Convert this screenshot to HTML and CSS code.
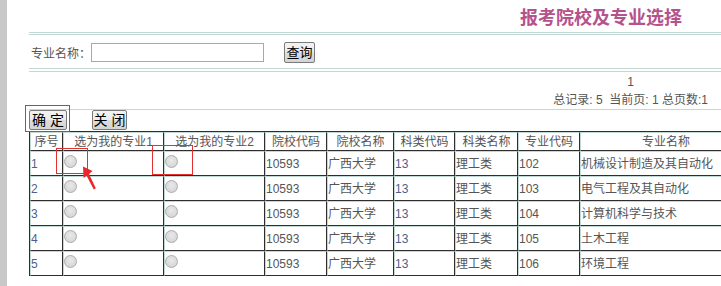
FILE: index.html
```html
<!DOCTYPE html>
<html lang="zh-CN">
<head>
<meta charset="utf-8">
<title>报考院校及专业选择</title>
<link rel="stylesheet" href="styles.css">
</head>
<body>
<div class="page">
  <div class="strip"></div>
  <div class="main">
    <h1 class="title">报考院校及专业选择</h1>
    <div class="rule rule-double"></div>
    <form class="search">
      <label class="search-label" for="zymc">专业名称<span class="colon">：</span></label>
      <input id="zymc" class="search-input" type="text">
      <button type="button" class="btn btn-query">查询</button>
    </form>
    <div class="rule rule-double2"></div>
    <div class="pager">
      <div class="pager-box">
        <div class="pager-num">1</div>
        <div class="pager-stats">总记录: 5&nbsp; 当前页: 1 总页数:1</div>
      </div>
    </div>
    <div class="rule rule-single"></div>
    <div class="actions">
      <button type="button" class="btn btn-ok">确 定</button>
      <button type="button" class="btn btn-close">关 闭</button>
    </div>
    <table class="grid">
      <thead>
        <tr>
          <th class="w-no">序号</th>
          <th class="w-pick">选为我的专业1</th>
          <th class="w-pick">选为我的专业2</th>
          <th class="w-code">院校代码</th>
          <th class="w-school">院校名称</th>
          <th class="w-kl">科类代码</th>
          <th class="w-klname">科类名称</th>
          <th class="w-zy">专业代码</th>
          <th class="w-zyname">专业名称</th>
        </tr>
      </thead>
      <tbody>
        <tr>
          <td class="blue">1</td>
          <td class="pick"><span class="radio"></span></td>
          <td class="pick"><span class="radio"></span></td>
          <td>10593</td><td>广西大学</td><td class="blue">13</td><td>理工类</td><td>102</td><td>机械设计制造及其自动化</td>
        </tr>
        <tr>
          <td class="blue">2</td>
          <td class="pick"><span class="radio"></span></td>
          <td class="pick"><span class="radio"></span></td>
          <td>10593</td><td>广西大学</td><td class="blue">13</td><td>理工类</td><td>103</td><td>电气工程及其自动化</td>
        </tr>
        <tr>
          <td class="blue">3</td>
          <td class="pick"><span class="radio"></span></td>
          <td class="pick"><span class="radio"></span></td>
          <td>10593</td><td>广西大学</td><td class="blue">13</td><td>理工类</td><td>104</td><td>计算机科学与技术</td>
        </tr>
        <tr>
          <td class="blue">4</td>
          <td class="pick"><span class="radio"></span></td>
          <td class="pick"><span class="radio"></span></td>
          <td>10593</td><td>广西大学</td><td class="blue">13</td><td>理工类</td><td>105</td><td>土木工程</td>
        </tr>
        <tr>
          <td class="blue">5</td>
          <td class="pick"><span class="radio"></span></td>
          <td class="pick"><span class="radio"></span></td>
          <td>10593</td><td>广西大学</td><td class="blue">13</td><td>理工类</td><td>106</td><td>环境工程</td>
        </tr>
      </tbody>
    </table>
  </div>
  <div class="mark mark-ok"></div>
  <div class="mark mark-r1"></div>
  <div class="mark mark-r2"></div>
  <svg class="arrow" width="22" height="28" viewBox="0 0 22 28">
    <polygon points="5,2.5 14.5,7 11,10 17.8,24.2 15.8,25.6 8.6,11.8 5.6,14" fill="#e8282c"/>
  </svg>
</div>
</body>
</html>
```

FILE: styles.css
```css
html, body {
  margin: 0;
  padding: 0;
  background: #fff;
  overflow: hidden;
}

body {
  font-family: "Liberation Sans", "Noto Sans CJK SC", sans-serif;
  font-size: 12px;
  color: #555;
}

.page {
  position: relative;
  display: flex;
  width: 721px;
  height: 286px;
  overflow: hidden;
}

.strip {
  flex: 0 0 7px;
  background: #c8c8c8;
}

.main {
  flex: 0 0 692px;
  min-width: 0;
  margin-left: 22px;
}

.title {
  margin: 0;
  padding: 6px 39px 0 0;
  height: 24px;
  line-height: 24px;
  font-size: 18px;
  font-weight: bold;
  text-align: right;
  color: #b5528c;
}

.rule-double {
  margin-top: 2px;
  height: 1px;
  border-top: 1px solid #c2d9d5;
  border-bottom: 1px solid #c2d9d5;
}

.rule-double2 {
  height: 2px;
  border-top: 1px solid #c2d9d5;
  border-bottom: 1px solid #c2d9d5;
}

.rule-single {
  height: 0;
  border-top: 1px solid #c2d9d5;
}

.search {
  display: flex;
  align-items: center;
  box-sizing: border-box;
  height: 33px;
  margin: 0;
  padding: 2px 0 0 2px;
}

.search-label {
  display: flex;
  width: 60px;
  font-size: 12px;
  color: #555;
}

.colon {
  display: inline-block;
  width: 12px;
  text-align: center;
  font-family: "Liberation Sans", sans-serif;
}

.search-input {
  box-sizing: border-box;
  width: 173px;
  height: 19px;
  margin: 0;
  padding: 0 2px;
  border: 1px solid #a9a9a9;
  background: #fff;
  outline: none;
}

.btn {
  box-sizing: border-box;
  margin: 0;
  padding: 0;
  border: 1px solid #7a7a7a;
  border-radius: 2px;
  background: linear-gradient(#f3f3f3 0%, #ebebeb 48%, #dddddd 52%, #d4d4d4 100%);
  color: #000;
  font-family: "Liberation Sans", "Noto Sans CJK SC", sans-serif;
  text-align: center;
  white-space: nowrap;
}

.btn-query {
  margin-left: 20px;
  width: 31px;
  height: 21px;
  font-size: 13px;
  line-height: 19px;
}

.pager {
  display: flex;
  justify-content: flex-end;
  box-sizing: border-box;
  height: 37px;
  padding: 1px 13px 0 0;
}

.pager-box {
  text-align: center;
  line-height: 18px;
  font-size: 12px;
  color: #555;
  white-space: nowrap;
}

.actions {
  display: flex;
  align-items: flex-start;
  gap: 25px;
  height: 21px;
}

.btn-ok,
.btn-close {
  height: 20px;
  font-size: 14px;
  line-height: 18px;
}

.btn-ok {
  width: 38px;
}

.btn-close {
  width: 35px;
}

.grid {
  border-collapse: separate;
  border-spacing: 0;
  table-layout: fixed;
  width: 723px;
  border-top: 1px solid #2e2e2e;
  border-left: 1px solid #2e2e2e;
}

.grid th,
.grid td {
  box-sizing: border-box;
  padding: 0;
  border-top: 1px solid #c2d9d5;
  border-left: 1px solid #c2d9d5;
  border-right: 1px solid #2e2e2e;
  border-bottom: 1px solid #2e2e2e;
  font-size: 12px;
  color: #555;
  white-space: nowrap;
  overflow: hidden;
}

.grid th {
  height: 19px;
  line-height: 16px;
  font-weight: normal;
  text-align: center;
  vertical-align: middle;
}

.grid td {
  height: 25px;
  line-height: 16px;
  text-align: left;
  vertical-align: middle;
}

.grid td.blue {
  color: #4a5f8f;
}

.grid td.pick {
  vertical-align: top;
  padding-top: 3px;
}

.radio {
  display: block;
  box-sizing: border-box;
  width: 13px;
  height: 13px;
  border-radius: 50%;
  border: 1px solid #ababab;
  background: radial-gradient(circle at 50% 40%, #e9e9e9 0%, #dadada 60%, #cfcfcf 100%);
}

.w-no { width: 33px; }
.w-pick { width: 101px; }
.w-code { width: 62px; }
.w-school { width: 67px; }
.w-kl { width: 61px; }
.w-klname { width: 63px; }
.w-zy { width: 62px; }
.w-zyname { width: 172px; }

.mark {
  position: absolute;
  box-sizing: border-box;
  border: 1px solid #e53030;
  pointer-events: none;
}

.mark-ok {
  left: 25px;
  top: 105px;
  width: 45px;
  height: 27px;
}

.mark-r1 {
  left: 56px;
  top: 148px;
  width: 32px;
  height: 26px;
}

.mark-r2 {
  left: 152px;
  top: 145px;
  width: 41px;
  height: 30px;
}

.arrow {
  position: absolute;
  left: 78px;
  top: 164px;
}
```
